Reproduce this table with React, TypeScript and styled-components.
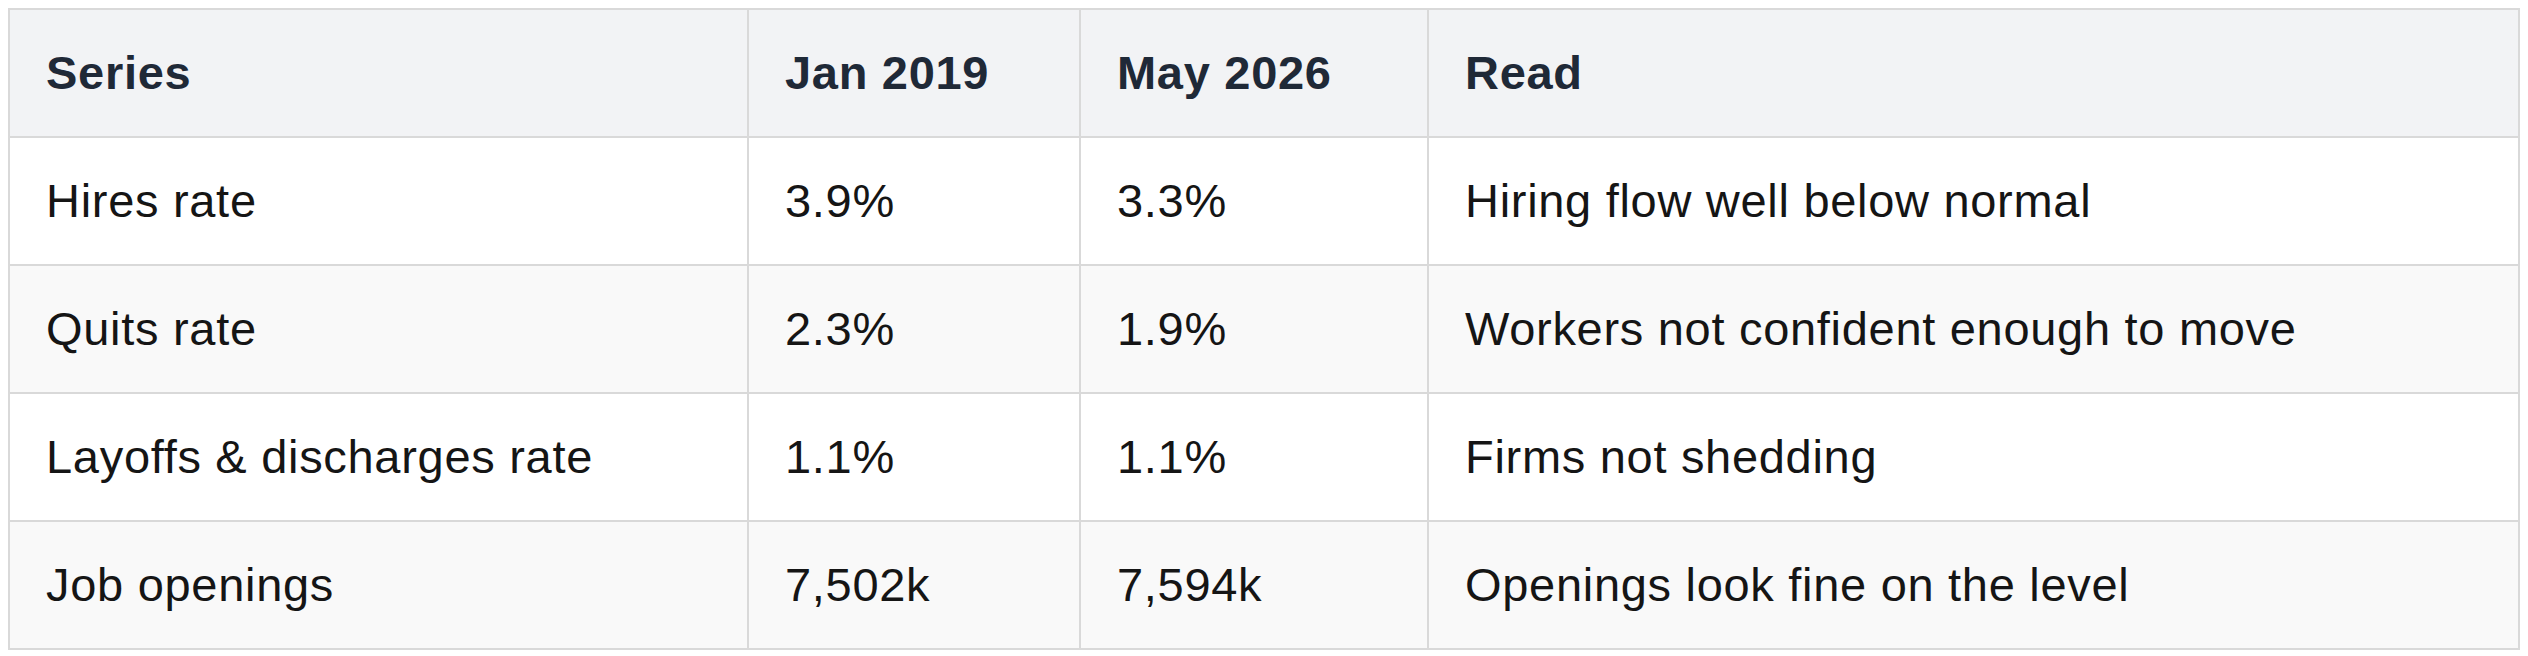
import React from "react";
import styled, { createGlobalStyle } from "styled-components";

const GlobalStyle = createGlobalStyle`
  html, body {
    margin: 0;
    padding: 0;
    background: #ffffff;
  }
  body {
    padding: 8px;
    font-family: "Liberation Sans", Arial, Helvetica, sans-serif;
  }
`;

const Table = styled.table`
  width: 2512px;
  border-collapse: collapse;
  table-layout: fixed;
  border: 2px solid #d9d9d9;
  font-family: "Liberation Sans", Arial, Helvetica, sans-serif;
  font-size: 47px;
  letter-spacing: 0.7px;
`;

const HeadRow = styled.tr`
  background: #f2f3f5;
`;

const BodyRow = styled.tr<{ $striped: boolean }>`
  background: ${(p) => (p.$striped ? "#f9f9f9" : "#ffffff")};
`;

const HeadCell = styled.th`
  text-align: left;
  font-weight: 700;
  color: #1f2937;
  line-height: 70px;
  padding: 28px 36px;
  border: 2px solid #d9d9d9;
  white-space: nowrap;
`;

const Cell = styled.td`
  text-align: left;
  font-weight: 400;
  color: #151515;
  line-height: 70px;
  padding: 28px 36px;
  border: 2px solid #d9d9d9;
  white-space: nowrap;
`;

const columns = [
  { label: "Series", width: 739 },
  { label: "Jan 2019", width: 332 },
  { label: "May 2026", width: 348 },
  { label: "Read", width: 1091 },
];

const rows = [
  ["Hires rate", "3.9%", "3.3%", "Hiring flow well below normal"],
  ["Quits rate", "2.3%", "1.9%", "Workers not confident enough to move"],
  ["Layoffs & discharges rate", "1.1%", "1.1%", "Firms not shedding"],
  ["Job openings", "7,502k", "7,594k", "Openings look fine on the level"],
];

export default function App() {
  return (
    <>
      <GlobalStyle />
      <Table>
        <colgroup>
          {columns.map((c) => (
            <col key={c.label} style={{ width: c.width }} />
          ))}
        </colgroup>
        <thead>
          <HeadRow>
            {columns.map((c) => (
              <HeadCell key={c.label}>{c.label}</HeadCell>
            ))}
          </HeadRow>
        </thead>
        <tbody>
          {rows.map((r, i) => (
            <BodyRow key={r[0]} $striped={i % 2 === 1}>
              {r.map((v, j) => (
                <Cell key={j}>{v}</Cell>
              ))}
            </BodyRow>
          ))}
        </tbody>
      </Table>
    </>
  );
}
